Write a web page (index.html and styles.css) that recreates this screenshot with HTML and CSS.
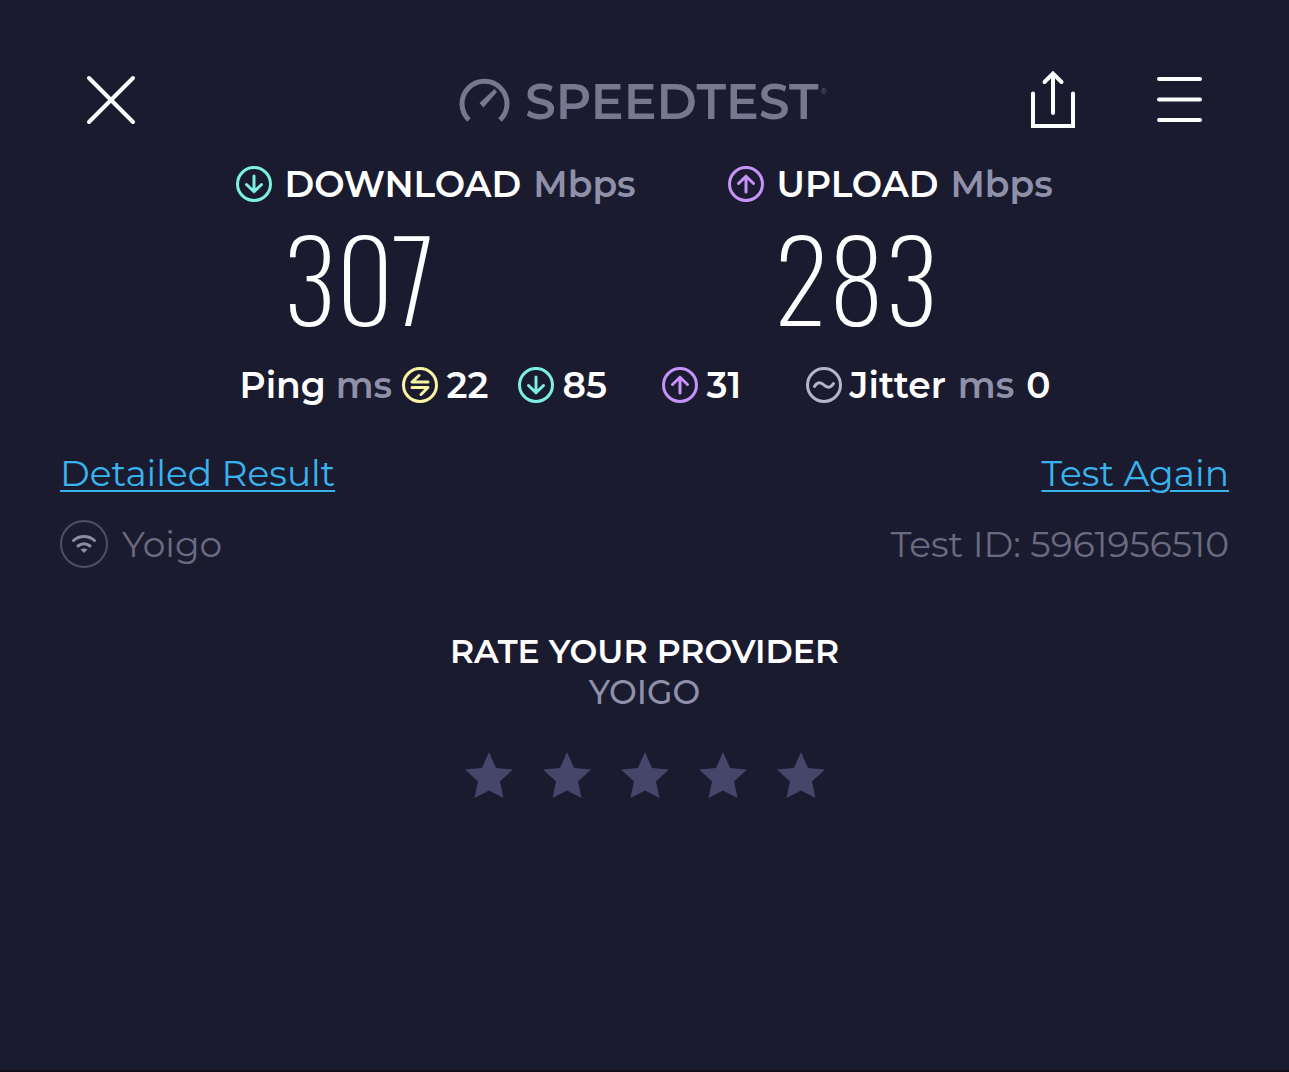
FILE: index.html
```html
<!DOCTYPE html>
<html lang="en">
<head>
    <meta charset="UTF-8">
    <meta name="viewport" content="width=device-width, initial-scale=1.0">
    <title>Speedtest</title>
    <link rel="stylesheet" href="styles.css">
</head>
<body>
    <!-- Shared icons -->
    <svg class="symbols" width="0" height="0" aria-hidden="true">
        <symbol id="icon-down" viewBox="0 0 38 38">
            <circle cx="19" cy="19" r="16.5"/>
            <path d="M19 11v15.5M11.5 19.5l7.5 7.3 7.5-7.3"/>
        </symbol>
        <symbol id="icon-up" viewBox="0 0 38 38">
            <circle cx="19" cy="19" r="16.5"/>
            <path d="M19 27V11.5M11.5 18.5l7.5-7.3 7.5 7.3"/>
        </symbol>
        <symbol id="icon-star" viewBox="0 0 48 48">
            <path d="M24 1l7 16 17 1.500-13 12 3.500 16.500L24 39.500 9.500 47 13 30.500 0 18.500 17 17z"/>
        </symbol>
    </svg>

    <header class="header">
        <button class="icon-button" aria-label="Close">
            <svg width="56" height="56" viewBox="0 0 56 56">
                <path d="M6 6l44 44M50 6L6 50"/>
            </svg>
        </button>

        <div class="logo">
            <svg class="logo-gauge" width="52" height="52" viewBox="0 0 52 52" aria-hidden="true">
                <path class="gauge-arc" d="M10 46A22.500 22.500 0 1 1 41 46"/>
                <path class="gauge-needle" d="M20.500 29L35.500 15 38 18 24.500 33.500z"/>
            </svg>
            <span class="logo-text">SPEEDTEST</span><span class="logo-mark">®</span>
        </div>

        <div class="header-actions">
            <button class="icon-button" aria-label="Share">
                <svg width="48" height="60" viewBox="0 0 48 60">
                    <path d="M4 23.500v32.500h40V23.500M24 43V3.500M15.500 12L24 3.500l8.500 8.500"/>
                </svg>
            </button>
            <button class="icon-button" aria-label="Menu">
                <svg width="48" height="60" viewBox="0 0 48 60">
                    <path d="M4 9h41M4 29.500h41M4 50h41"/>
                </svg>
            </button>
        </div>
    </header>

    <main>
        <section class="speeds">
            <div class="speed">
                <h2 class="speed-title">
                    <svg class="icon download" width="38" height="38"><use href="#icon-down"/></svg>
                    DOWNLOAD <span class="unit">Mbps</span>
                </h2>
                <p class="speed-value">307</p>
            </div>
            <div class="speed">
                <h2 class="speed-title">
                    <svg class="icon upload" width="38" height="38"><use href="#icon-up"/></svg>
                    UPLOAD <span class="unit">Mbps</span>
                </h2>
                <p class="speed-value">283</p>
            </div>
        </section>

        <section class="latency">
            <div class="latency-label">Ping <span class="unit">ms</span></div>
            <div class="latency-item">
                <svg class="icon idle" width="38" height="38" viewBox="0 0 38 38">
                    <circle cx="19" cy="19" r="16.500"/>
                    <path d="M18 9.500l-7 6.500h16M11 21.500h16l-7 7"/>
                </svg>
                22
            </div>
            <div class="latency-item">
                <svg class="icon download" width="38" height="38"><use href="#icon-down"/></svg>
                85
            </div>
            <div class="latency-item">
                <svg class="icon upload" width="38" height="38"><use href="#icon-up"/></svg>
                31
            </div>
            <div class="latency-item jitter">
                <svg class="icon wave" width="38" height="38" viewBox="0 0 38 38">
                    <circle cx="19" cy="19" r="16.500"/>
                    <path d="M9.500 20.500c3-5 6.500-4.500 9.500-1.500s6.500 3.500 9.500-1.500"/>
                </svg>
                <span>Jitter</span>
                <span class="unit">ms</span>
                <span>0</span>
            </div>
        </section>

        <section class="details">
            <div class="details-row">
                <a class="link" href="#">Detailed Result</a>
                <a class="link" href="#">Test Again</a>
            </div>
            <div class="details-row muted">
                <div class="provider">
                    <svg width="48" height="48" viewBox="0 0 48 48" aria-hidden="true">
                        <circle class="wifi-ring" cx="24" cy="24" r="23"/>
                        <path class="wifi-arc" d="M13.500 20.500c6-5.300 15-5.300 21 0M18 26c3.500-3 8.500-3 12 0"/>
                        <path class="wifi-dot" d="M20.500 29.500q3.500-2 7 0L24 33z"/>
                    </svg>
                    Yoigo
                </div>
                <div>Test ID: 5961956510</div>
            </div>
        </section>

        <section class="rate">
            <h3 class="rate-title">RATE YOUR PROVIDER</h3>
            <p class="rate-provider">YOIGO</p>
            <div class="stars">
                <button class="star" aria-label="1 star"><svg width="48" height="48"><use href="#icon-star"/></svg></button>
                <button class="star" aria-label="2 stars"><svg width="48" height="48"><use href="#icon-star"/></svg></button>
                <button class="star" aria-label="3 stars"><svg width="48" height="48"><use href="#icon-star"/></svg></button>
                <button class="star" aria-label="4 stars"><svg width="48" height="48"><use href="#icon-star"/></svg></button>
                <button class="star" aria-label="5 stars"><svg width="48" height="48"><use href="#icon-star"/></svg></button>
            </div>
        </section>
    </main>
</body>
</html>
```

FILE: styles.css
```css
* {
    box-sizing: border-box;
}

body {
    margin: 0;
    min-height: 100vh;
    background-color: #1a1b2e;
    border-bottom: 2px solid #140f1e;
    color: #fff;
    font-family: Montserrat, Inter, sans-serif;
    font-size: 36px;
    line-height: 46px;
}

h2, h3, p {
    margin: 0;
    font-size: inherit;
}

button {
    padding: 0;
    border: none;
    background: none;
    cursor: pointer;
}

svg {
    display: block;
    flex: none;
}

.symbols {
    position: absolute;
}

/* Header */
.header {
    display: grid;
    grid-template-columns: 1fr auto 1fr;
    align-items: center;
    padding: 68px 86px 29px 83px;
}

.icon-button {
    justify-self: start;
    fill: none;
    stroke: #fff;
    stroke-width: 4;
    stroke-linecap: round;
}

.logo {
    display: flex;
    align-items: center;
    gap: 14px;
    height: 64px;
    color: #77778f;
}

.gauge-arc {
    fill: none;
    stroke: #77778f;
    stroke-width: 5;
}

.gauge-needle {
    fill: #77778f;
}

.logo-text {
    padding-top: 4px;
    font-size: 49px;
    font-weight: 600;
}

.logo-mark {
    align-self: flex-start;
    margin-left: -12px;
    font-size: 8px;
}

.header-actions {
    display: flex;
    justify-content: flex-end;
    gap: 78px;
}

/* Download and upload */
.speeds,
.latency {
    max-width: 820px;
    margin: 0 auto;
    display: grid;
    font-weight: 600;
}

.speeds {
    grid-template-columns: 3fr 2fr;
}

.speed-title {
    display: flex;
    align-items: center;
    gap: 12px;
    font-weight: 600;
}

.unit {
    color: #8f90a9;
}

.speed-value {
    margin: 9px 0 26px 48px;
    font-family: Oswald, "Roboto Condensed", Roboto, sans-serif;
    font-size: 111px;
    font-weight: 200;
    line-height: 120px;
}

.icon {
    fill: none;
    stroke-width: 3;
    stroke-linecap: round;
    stroke-linejoin: round;
}

.download {
    stroke: #7df0e4;
}

.upload {
    stroke: #c793fa;
}

.idle {
    stroke: #fbf6a5;
}

.wave {
    stroke: #b4b5cd;
}

/* Ping and jitter */
.latency {
    grid-template-columns: 166fr 116fr 144fr 144fr 250fr;
}

.latency-label {
    padding-left: 5px;
}

.latency-item {
    display: flex;
    align-items: center;
    gap: 8px;
}

.jitter {
    gap: 12px;
}

.jitter .icon {
    margin-right: -5px;
}

/* Links and provider */
.details {
    padding: 42px 60px 0;
}

.details-row {
    display: flex;
    align-items: center;
    justify-content: space-between;
}

.link {
    color: #39b3ee;
    text-decoration-thickness: 2px;
    text-underline-offset: 4px;
}

.muted {
    margin-top: 24px;
    color: #6b6b80;
}

.provider {
    display: flex;
    align-items: center;
    gap: 14px;
}

.wifi-ring {
    fill: none;
    stroke: #505064;
    stroke-width: 2;
}

.wifi-arc {
    fill: none;
    stroke: #8c8ca2;
    stroke-width: 3;
    stroke-linecap: round;
}

.wifi-dot {
    fill: #8c8ca2;
}

/* Rating */
.rate {
    margin-top: 63px;
    text-align: center;
    font-size: 33px;
    line-height: 41px;
}

.rate-title {
    font-weight: 600;
}

.rate-provider {
    color: #8f90a9;
    font-weight: 500;
}

.stars {
    display: flex;
    justify-content: center;
    gap: 30px;
    margin-top: 38px;
}

.star {
    fill: #45466a;
}
```
